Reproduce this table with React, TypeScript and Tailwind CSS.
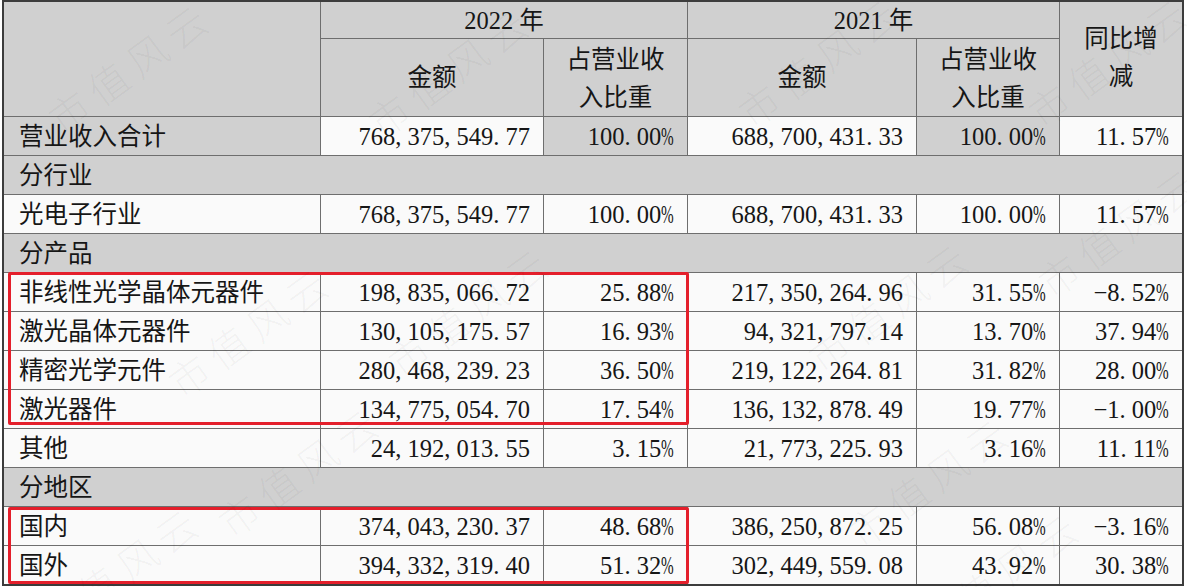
import type { ReactNode } from 'react';

type DataRow = {
  kind: 'data';
  label: string;
  a22: string;
  r22: string;
  a21: string;
  r21: string;
  yoy: string;
  total?: boolean;
};
type SectionRow = { kind: 'section'; label: string };
type Row = DataRow | SectionRow;

const rows: Row[] = [
  { kind: 'data', label: '营业收入合计', a22: '768,375,549.77', r22: '100.00%', a21: '688,700,431.33', r21: '100.00%', yoy: '11.57%', total: true },
  { kind: 'section', label: '分行业' },
  { kind: 'data', label: '光电子行业', a22: '768,375,549.77', r22: '100.00%', a21: '688,700,431.33', r21: '100.00%', yoy: '11.57%' },
  { kind: 'section', label: '分产品' },
  { kind: 'data', label: '非线性光学晶体元器件', a22: '198,835,066.72', r22: '25.88%', a21: '217,350,264.96', r21: '31.55%', yoy: '-8.52%' },
  { kind: 'data', label: '激光晶体元器件', a22: '130,105,175.57', r22: '16.93%', a21: '94,321,797.14', r21: '13.70%', yoy: '37.94%' },
  { kind: 'data', label: '精密光学元件', a22: '280,468,239.23', r22: '36.50%', a21: '219,122,264.81', r21: '31.82%', yoy: '28.00%' },
  { kind: 'data', label: '激光器件', a22: '134,775,054.70', r22: '17.54%', a21: '136,132,878.49', r21: '19.77%', yoy: '-1.00%' },
  { kind: 'data', label: '其他', a22: '24,192,013.55', r22: '3.15%', a21: '21,773,225.93', r21: '3.16%', yoy: '11.11%' },
  { kind: 'section', label: '分地区' },
  { kind: 'data', label: '国内', a22: '374,043,230.37', r22: '48.68%', a21: '386,250,872.25', r21: '56.08%', yoy: '-3.16%' },
  { kind: 'data', label: '国外', a22: '394,332,319.40', r22: '51.32%', a21: '302,449,559.08', r21: '43.92%', yoy: '30.38%' },
];

// 水印位置 (中心点)
const marks = [
  [130, 66], [450, 70], [820, 60], [1110, 60],
  [250, 330], [470, 310], [890, 305], [1120, 230],
  [300, 470], [930, 480], [120, 570], [1000, 575],
];

// 宋体风格的半角数字：逗号、句点占一个字宽
function Num({ v }: { v: string }) {
  return (
    <span className="whitespace-nowrap">
      {v.split('').map((c, i) => {
        if (c === ',' || c === '.') {
          return (
            <span key={i} className="mr-[0.25em]">
              {c}
            </span>
          );
        }
        if (c === '%') {
          return (
            <span key={i} className="inline-block w-[0.52em] scale-x-[0.62] origin-left">
              %
            </span>
          );
        }
        if (c === '-') {
          return (
            <span key={i} className="inline-block w-[0.55em]">
              −
            </span>
          );
        }
        return <span key={i}>{c}</span>;
      })}
    </span>
  );
}

function Cell({
  children,
  gray,
  right,
  className = '',
}: {
  children?: ReactNode;
  gray?: boolean;
  right?: boolean;
  className?: string;
}) {
  return (
    <div
      className={`flex items-center h-[38px] pt-[3px] ${gray ? 'bg-[#d0d0d0]' : 'bg-[#fafafa]'} ${
        right ? 'justify-end pr-[13px]' : 'pl-[15px]'
      } ${className}`}
    >
      {children}
    </div>
  );
}

export default function App() {
  return (
    <div className="relative w-[1187px] h-[587px] bg-white overflow-hidden text-[24.5px] leading-none text-[#161616] font-['Liberation_Serif','Noto_Sans_CJK_SC',serif]">
      <div className="ml-[2px] w-[1182px] border-2 border-[#3c3c3c] bg-[#6e6e6e] grid grid-cols-[316px_222px_143px_228px_142px_122px] gap-px">
        {/* 表头 */}
        <div className="row-span-2 bg-[#d0d0d0]" />
        <div className="col-span-2 h-[36px] bg-[#d0d0d0] flex items-center justify-center pt-[2px]">2022 年</div>
        <div className="col-span-2 h-[36px] bg-[#d0d0d0] flex items-center justify-center pt-[2px]">2021 年</div>
        <div className="row-span-2 bg-[#d0d0d0] flex items-center justify-center text-center leading-[38px] pb-[2px]">
          同比增
          <br />
          减
        </div>
        <div className="h-[77px] bg-[#d0d0d0] flex items-center justify-center pt-[2px]">金额</div>
        <div className="h-[77px] bg-[#d0d0d0] flex items-center justify-center text-center leading-[38px] pt-[2px]">
          占营业收
          <br />
          入比重
        </div>
        <div className="h-[77px] bg-[#d0d0d0] flex items-center justify-center pt-[2px]">金额</div>
        <div className="h-[77px] bg-[#d0d0d0] flex items-center justify-center text-center leading-[38px] pt-[2px]">
          占营业收
          <br />
          入比重
        </div>

        {/* 数据行 */}
        {rows.map((r, i) =>
          r.kind === 'section' ? (
            <Cell key={i} gray className="col-span-6">
              {r.label}
            </Cell>
          ) : (
            <div key={i} className="contents">
              <Cell gray={r.total}>{r.label}</Cell>
              <Cell right>
                <Num v={r.a22} />
              </Cell>
              <Cell right gray={r.total}>
                <Num v={r.r22} />
              </Cell>
              <Cell right>
                <Num v={r.a21} />
              </Cell>
              <Cell right gray={r.total}>
                <Num v={r.r21} />
              </Cell>
              <Cell right>
                <Num v={r.yoy} />
              </Cell>
            </div>
          )
        )}
      </div>

      {/* 红框标注 */}
      <div className="absolute left-[8px] top-[272px] w-[681px] h-[153px] border-[3px] border-[#e41f2b] rounded-[2px] pointer-events-none" />
      <div className="absolute left-[8px] top-[507px] w-[681px] h-[77px] border-[3px] border-[#e41f2b] rounded-[2px] pointer-events-none" />

      {/* 水印 */}
      {marks.map(([x, y], i) => (
        <div
          key={i}
          aria-hidden
          className="absolute -translate-x-1/2 -translate-y-1/2 -rotate-[36deg] text-[40px] tracking-[8px] text-black/[0.045] whitespace-nowrap pointer-events-none select-none font-['Noto_Sans_CJK_SC',sans-serif] font-light"
          style={{ left: x, top: y }}
        >
          市值风云
        </div>
      ))}
    </div>
  );
}
